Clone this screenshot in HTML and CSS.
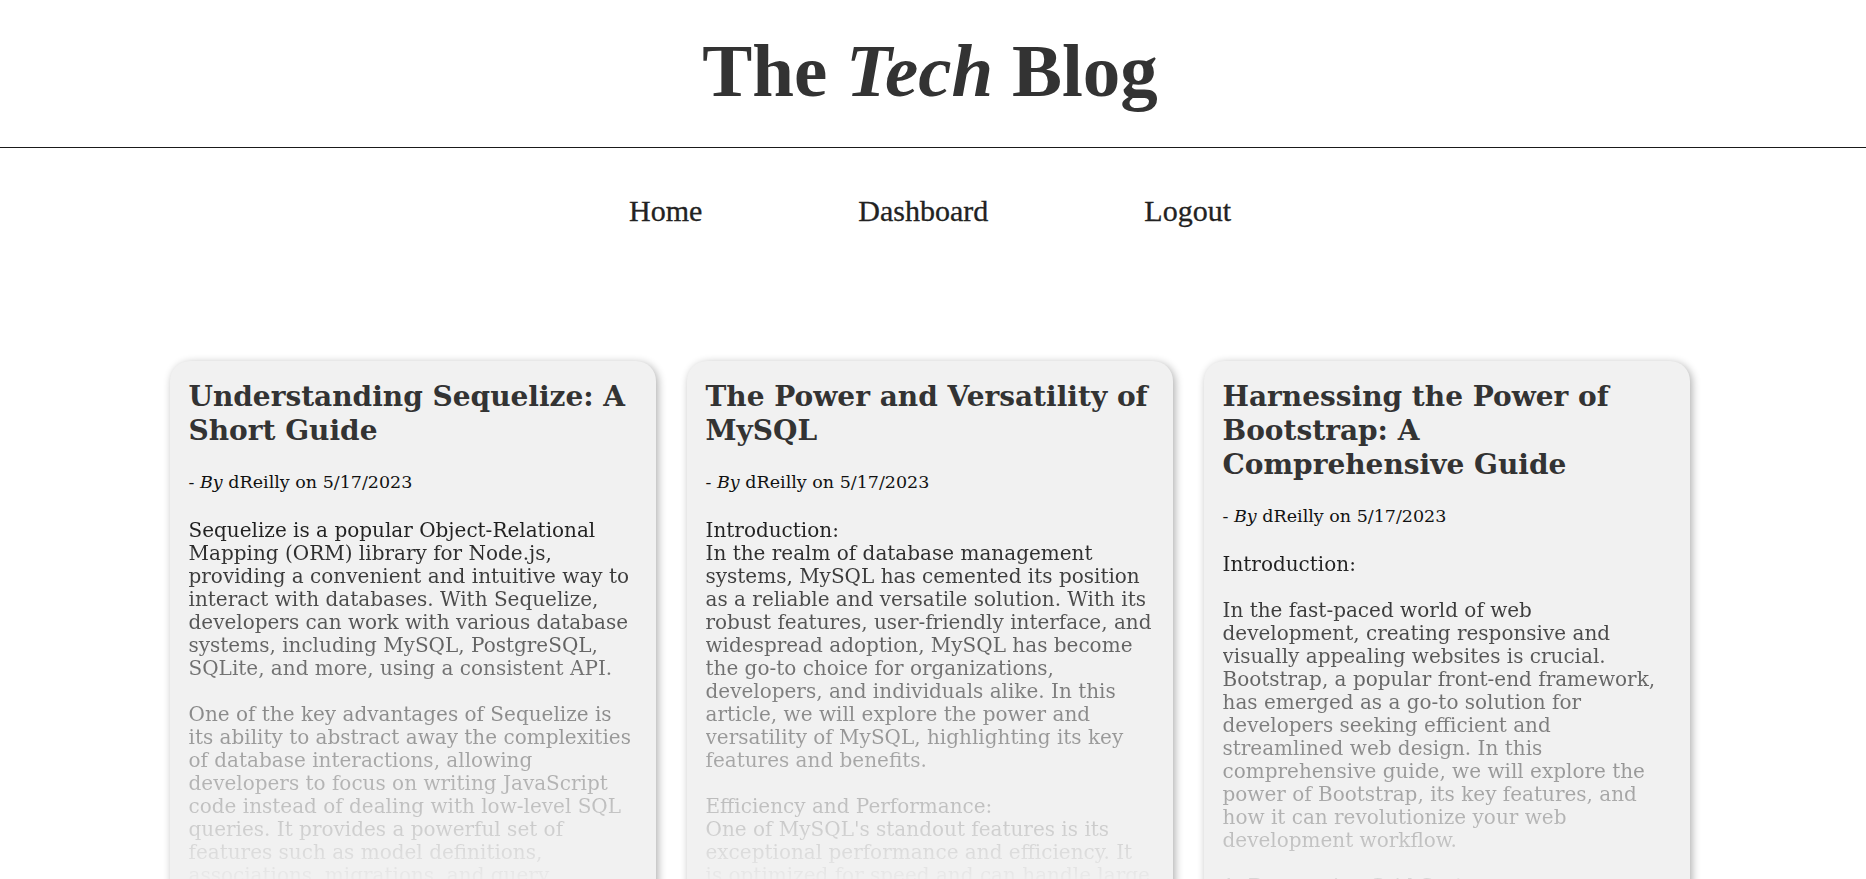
FILE: index.html
```html
<!DOCTYPE html>
<html lang="en">
<head>
<meta charset="utf-8">
<title>The Tech Blog</title>
<link rel="stylesheet" href="styles.css">
</head>
<body>
<header class="site-header">
  <h1 class="site-title">The <em>Tech</em> Blog</h1>
</header>
<nav class="site-nav">
  <a href="#" class="nav-link">Home</a>
  <a href="#" class="nav-link">Dashboard</a>
  <a href="#" class="nav-link">Logout</a>
</nav>
<main class="posts">
  <article class="post-card">
    <h2 class="post-title">Understanding Sequelize: A Short Guide</h2>
    <p class="post-meta">- <em>By</em> dReilly on 5/17/2023</p>
    <div class="post-body">Sequelize is a popular Object-Relational Mapping (ORM) library for Node.js, providing a convenient and intuitive way to interact with databases. With Sequelize, developers can work with various database systems, including MySQL, PostgreSQL, SQLite, and more, using a consistent API.

One of the key advantages of Sequelize is its ability to abstract away the complexities of database interactions, allowing developers to focus on writing JavaScript code instead of dealing with low-level SQL queries. It provides a powerful set of features such as model definitions, associations, migrations, and query building, making it easier to manage your data layer.</div>
  </article>
  <article class="post-card">
    <h2 class="post-title">The Power and Versatility of MySQL</h2>
    <p class="post-meta">- <em>By</em> dReilly on 5/17/2023</p>
    <div class="post-body">Introduction:
In the realm of database management systems, MySQL has cemented its position as a reliable and versatile solution. With its robust features, user-friendly interface, and widespread adoption, MySQL has become the go-to choice for organizations, developers, and individuals alike. In this article, we will explore the power and versatility of MySQL, highlighting its key features and benefits.

Efficiency and Performance:
One of MySQL's standout features is its exceptional performance and efficiency. It is optimized for speed and can handle large volumes of data without compromising on reliability.</div>
  </article>
  <article class="post-card">
    <h2 class="post-title">Harnessing the Power of Bootstrap: A Comprehensive Guide</h2>
    <p class="post-meta">- <em>By</em> dReilly on 5/17/2023</p>
    <div class="post-body">Introduction:

In the fast-paced world of web development, creating responsive and visually appealing websites is crucial. Bootstrap, a popular front-end framework, has emerged as a go-to solution for developers seeking efficient and streamlined web design. In this comprehensive guide, we will explore the power of Bootstrap, its key features, and how it can revolutionize your web development workflow.

1. Responsive Grid System:
Bootstrap's grid system makes it simple to build layouts that adapt to any screen size.</div>
  </article>
</main>
</body>
</html>
```
FILE: styles.css
```css
* {
  box-sizing: border-box;
}

body {
  margin: 0;
  background: #ffffff;
  color: #222222;
  font-family: "DejaVu Serif", "Liberation Serif", serif;
}

.site-header {
  padding: 34px 6px 40px 0;
  border-bottom: 1px solid #1a1a1a;
}

.site-title {
  margin: 0;
  text-align: center;
  font-family: "Liberation Serif", serif;
  font-weight: 700;
  font-size: 75px;
  line-height: 73px;
  color: #333333;
}

.site-title em {
  font-style: italic;
}

.site-nav {
  display: flex;
  justify-content: center;
  gap: 156px;
  padding: 48px 6px 0 0;
}

.nav-link {
  font-family: "Liberation Serif", serif;
  font-size: 30px;
  line-height: 29px;
  color: #222222;
  text-decoration: none;
  -webkit-text-stroke: 0.3px #222222;
}

.posts {
  display: grid;
  grid-template-columns: repeat(3, 486px);
  justify-content: center;
  gap: 31px;
  margin-top: 136px;
  padding-right: 7px;
}

.post-card {
  background: #f1f1f1;
  border-radius: 20px;
  box-shadow: 2px 2px 8px rgba(0, 0, 0, 0.32);
  padding: 19px 19px 30px 19px;
  min-height: 560px;
}

.post-title {
  margin: 0;
  max-width: 445px;
  font-size: 28px;
  line-height: 34px;
  font-weight: 700;
  color: #333333;
}

.post-meta {
  margin: 23px 0 0 0;
  font-size: 17.5px;
  line-height: 23px;
  color: #111111;
}

.post-body {
  margin-top: 25px;
  font-size: 20px;
  line-height: 23px;
  color: #1a1a1a;
  white-space: pre-line;
  -webkit-mask-image: linear-gradient(to bottom, #000 0, rgba(0, 0, 0, 0) 370px);
  mask-image: linear-gradient(to bottom, #000 0, rgba(0, 0, 0, 0) 370px);
}
```
